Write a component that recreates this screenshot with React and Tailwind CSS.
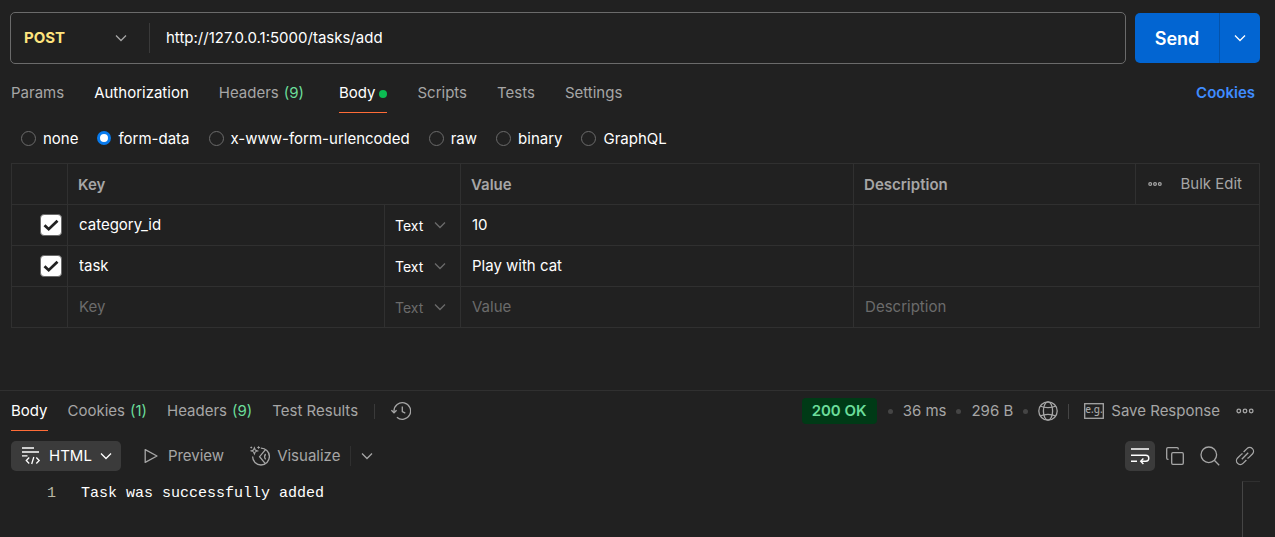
import React from "react";

const UI_FONT = "font-['Inter','Liberation_Sans',sans-serif]";

function Svg({ size = 20, className = "", children }) {
  return (
    <svg
      width={size}
      height={size}
      viewBox={`0 0 ${size} ${size}`}
      fill="none"
      stroke="currentColor"
      strokeWidth="1.3"
      className={`shrink-0 ${className}`}
      aria-hidden="true"
    >
      {children}
    </svg>
  );
}

function Chevron({ className = "" }) {
  return (
    <Svg size={12} className={className}>
      <path d="M1 3.5 6 8.5 11 3.5" />
    </Svg>
  );
}

function Dots() {
  return (
    <Svg size={18}>
      <circle cx="2.8" cy="9" r="1.8" />
      <circle cx="9" cy="9" r="1.8" />
      <circle cx="15.2" cy="9" r="1.8" />
    </Svg>
  );
}

function SmallDots() {
  return (
    <svg width="14" height="6" viewBox="0 0 14 6" fill="none" stroke="currentColor" strokeWidth="1.2" aria-hidden="true">
      <circle cx="2.2" cy="3" r="1.4" />
      <circle cx="7" cy="3" r="1.4" />
      <circle cx="11.8" cy="3" r="1.4" />
    </svg>
  );
}

function HistoryIcon() {
  return (
    <Svg>
      <path d="M3 11.500V10a8.300 8.300 0 1 1 2.900 6.300" />
      <path d="M.4 9.200 3 11.800 5.600 9.200" />
      <path d="M11.300 5.500v5.200l3 1.500" />
    </Svg>
  );
}

function GlobeIcon() {
  return (
    <Svg>
      <circle cx="10" cy="10" r="9.2" />
      <ellipse cx="10" cy="10" rx="4.600" ry="9.200" />
      <path d="M2.200 5c4.300 2.200 11.300 2.200 15.600 0M2.200 15c4.300-2.200 11.300-2.200 15.600 0" />
    </Svg>
  );
}

function ExampleIcon() {
  return (
    <svg width="20" height="16" viewBox="0 0 20 16" fill="none" stroke="currentColor" strokeWidth="1.3" className="shrink-0" aria-hidden="true">
      <rect x=".7" y=".7" width="18.6" height="14.6" />
      <text x="10" y="10" textAnchor="middle" fontFamily="Noto Sans" fontWeight="500" fontSize="10" fill="currentColor" stroke="none">
        e.g.
      </text>
    </svg>
  );
}

function FormatIcon() {
  return (
    <Svg className="text-white">
      <path d="M1 2h12M1 6h17M1 9.800h5.500" />
      <path d="M8.200 11.500 5.300 14.500 8.200 17.500M15.300 11.500 18.200 14.500 15.300 17.500M12.800 11 10.700 18" />
    </Svg>
  );
}

function PlayIcon() {
  return (
    <Svg size={16}>
      <path d="M2.200 1.600v12.800L14 8z" strokeLinejoin="round" />
    </Svg>
  );
}

function VisualizeIcon() {
  return (
    <Svg>
      <path d="M10.800 2.200A8.400 8.400 0 1 1 2.600 10.500" />
      <path d="M15.500 3.600 9.600 10.700 15.300 17.600" />
      <path d="M15.600 8c-1.300 1.700-1.300 3.700 0 5.400" />
      <path d="M4.400 1.700 5.300 4 7.600 4.900 5.300 5.800 4.400 8.100 3.500 5.800 1.200 4.900 3.500 4z" strokeWidth="1.100" />
      <path d="M8.600.2v2.600M7.300 1.500h2.600M1.300 .6v1.800M.4 1.500h1.800" strokeWidth="1" />
    </Svg>
  );
}

function WrapIcon() {
  return (
    <Svg className="text-white">
      <path d="M1 3h18M1 9.200h14.800a2.900 2.900 0 0 1 0 6H11M1 15.200h6" strokeWidth="1.4" />
      <path d="M13.400 12.500 10.700 15.200 13.400 18" strokeWidth="1.400" />
    </Svg>
  );
}

function CopyIcon() {
  return (
    <Svg>
      <rect x="6.700" y="6.700" width="11.600" height="11.600" rx="1.200" />
      <path d="M3.500 13.300H2.900a1.200 1.200 0 0 1-1.200-1.200V2.900a1.200 1.200 0 0 1 1.200-1.200h9.200a1.200 1.200 0 0 1 1.200 1.200v.6" />
    </Svg>
  );
}

function SearchIcon() {
  return (
    <Svg>
      <circle cx="8.800" cy="8.800" r="7.800" />
      <path d="m14.300 14.300 4.900 4.900" />
    </Svg>
  );
}

function LinkIcon() {
  return (
    <Svg>
      <path d="m6.800 13.200 6.400-6.400" />
      <path d="M8.600 6 12 2.600a3.800 3.800 0 0 1 5.400 5.400L14 11.400a3.800 3.800 0 0 1-1.600 1" />
      <path d="M11.400 14 8 17.400A3.800 3.800 0 0 1 2.600 12L6 8.600a3.800 3.800 0 0 1 1.600-1" />
    </Svg>
  );
}

function RequestBar() {
  return (
    <form className="flex items-center gap-[9px] pt-3 pr-[15px] pl-[10px]" onSubmit={(e) => e.preventDefault()}>
      <div className="flex h-[52px] min-w-0 flex-1 items-center rounded-[5px] border border-[#6b6b6b]">
        <div className="relative flex items-center">
          <select aria-label="Method" className="h-8 w-[138px] appearance-none bg-transparent pt-px pl-[13px] text-[15px] font-bold text-[#ffe47e] outline-none">
            <option>POST</option>
          </select>
          <Chevron className="pointer-events-none absolute right-[22px] text-[#a6a6a6]" />
        </div>
        <div className="h-[30px] w-px bg-[#3a3a3a]" />
        <input aria-label="Request URL" defaultValue="http://127.0.0.1:5000/tasks/add" className="h-8 min-w-0 flex-1 bg-transparent px-4 pb-[2px] text-[15px] text-white outline-none" />
      </div>
      <div className="flex h-[50px] overflow-hidden rounded-[5px] bg-[#0265d2] text-white">
        <button type="submit" className="w-[84px] text-[18px] font-semibold">Send</button>
        <button type="button" aria-label="Send options" className="flex w-[41px] items-center justify-center border-l border-[#0453ab]">
          <Chevron />
        </button>
      </div>
    </form>
  );
}

function RequestTabs() {
  const base = "flex h-[40px] items-center border-b pt-[2px]";
  const idle = `${base} border-transparent`;
  return (
    <div className="flex items-center justify-between pt-[9px] pr-5 pl-[11px] text-[15px] text-[#a6a6a6]">
      <nav className="flex gap-[30px]">
        <button className={idle}>Params</button>
        <button className={`${idle} text-white`}>Authorization</button>
        <button className={`${idle} gap-[5px] pr-[5px]`}>
          Headers <span className="text-[#6bdd9a]">(9)</span>
        </button>
        <button className={`${base} gap-1 border-[#ff6c37] text-white`}>
          Body <span className="size-2 rounded-full bg-[#0cbb52]" />
        </button>
        <button className={idle}>Scripts</button>
        <button className={idle}>Tests</button>
        <button className={idle}>Settings</button>
      </nav>
      <a href="#cookies" className="font-semibold text-[#3f8cff]">Cookies</a>
    </div>
  );
}

const bodyTypes = ["none", "form-data", "x-www-form-urlencoded", "raw", "binary", "GraphQL"];

function BodyTypes() {
  return (
    <div role="radiogroup" aria-label="Body type" className="flex h-[50px] items-center gap-[19px] pl-[21px] text-[15px] text-white">
      {bodyTypes.map((t) => (
        <label key={t} className="flex items-center gap-[7px]">
          <input
            type="radio"
            name="body-type"
            defaultChecked={t === "form-data"}
            className="size-[15px] appearance-none rounded-full border border-[#6b6b6b] checked:size-[14px] checked:border-[3px] checked:border-[#097bed] checked:bg-white"
          />
          <span className="pt-[2px]">{t}</span>
        </label>
      ))}
    </div>
  );
}

const rows = [
  { key: "category_id", value: "10" },
  { key: "task", value: "Play with cat" },
  { key: "", value: "" },
];

const cell = "h-[41px] border border-[#303030] p-0";
const head = "h-[41px] border border-[#303030] pt-[2px] pr-0 pb-0 pl-[10px] font-semibold";
const field = "block h-8 w-full bg-transparent px-[11px] pb-[2px] text-[15px] text-white outline-none placeholder:text-[#6b6b6b]";

function ParamTable() {
  return (
    <div className="pr-[15px] pl-[11px]">
      <table className="w-full table-fixed border-collapse text-left text-[15px]">
        <colgroup>
          <col className="w-[56px]" />
          <col className="w-[25.4%]" />
          <col className="w-[76px]" />
          <col className="w-[31.5%]" />
          <col />
          <col className="w-[124px]" />
        </colgroup>
        <thead className="text-[#a6a6a6]">
          <tr>
            <th className={cell} aria-label="Enabled" />
            <th colSpan={2} className={head}>Key</th>
            <th className={head}>Value</th>
            <th className={head}>Description</th>
            <th className={`${cell} font-normal`}>
              <div className="flex items-center justify-between pr-[17px] pl-3">
                <button aria-label="Columns"><SmallDots /></button>
                <button>Bulk Edit</button>
              </div>
            </th>
          </tr>
        </thead>
        <tbody>
          {rows.map((r, i) => (
            <tr key={i}>
              <td className={cell}>
                {r.key && (
                  <label className="relative ml-auto mr-[5px] flex size-[22px] items-center justify-center">
                    <input type="checkbox" defaultChecked aria-label={`Enable ${r.key}`} className="size-[22px] appearance-none rounded-[4px] border border-[#6b6b6b] bg-white" />
                    <svg width="16" height="14" viewBox="0 0 16 14" fill="none" stroke="#212121" strokeWidth="2.800" className="pointer-events-none absolute" aria-hidden="true">
                      <path d="M1.500 7.300 5.700 11.200 14.500 2.800" />
                    </svg>
                  </label>
                )}
              </td>
              <td className={cell}>
                <input aria-label={`Key ${i + 1}`} placeholder="Key" defaultValue={r.key} className={field} />
              </td>
              <td className={cell}>
                <div className="relative flex items-center">
                  <select aria-label={`Type ${i + 1}`} className={`h-8 w-full appearance-none bg-transparent pl-[10px] text-[14px] outline-none ${r.key ? "text-white" : "text-[#6b6b6b]"}`}>
                    <option>Text</option>
                  </select>
                  <Chevron className="pointer-events-none absolute right-[14px] text-[#6b6b6b]" />
                </div>
              </td>
              <td className={cell}>
                <input aria-label={`Value ${i + 1}`} placeholder="Value" defaultValue={r.value} className={field} />
              </td>
              <td className={cell} colSpan={2}>
                <input aria-label={`Description ${i + 1}`} placeholder={r.key ? "" : "Description"} className={field} />
              </td>
            </tr>
          ))}
        </tbody>
      </table>
    </div>
  );
}

function Dot() {
  return <span className="size-[5px] rounded-full bg-[#454545]" />;
}

function ResponseTabs() {
  const base = "flex h-[40px] items-center gap-[5px] border-b pt-[2px]";
  const idle = `${base} border-transparent`;
  return (
    <div className="flex items-center justify-between border-t border-[#303030] pr-[21px] pl-[11px] text-[15px] text-[#a6a6a6]">
      <nav className="flex items-center gap-5">
        <button className={`${base} border-[#ff6c37] text-white`}>Body</button>
        <button className={idle}>Cookies <span className="text-[#6bdd9a]">(1)</span></button>
        <button className={idle}>Headers <span className="text-[#6bdd9a]">(9)</span></button>
        <button className={idle}>Test Results</button>
        <div className="-mx-1 h-[15px] w-px bg-[#3a3a3a]" />
        <button aria-label="History"><HistoryIcon /></button>
      </nav>
      <div className="flex items-center gap-[10px]">
        <div className="flex items-center gap-[10px]">
          <span className="mr-px flex h-[26px] items-center rounded-[4px] bg-[#003a16] px-[10px] font-semibold text-[#6bdd9a]">200 OK</span>
          <Dot />
          <span>36 ms</span>
          <Dot />
          <span>296 B</span>
          <Dot />
          <button aria-label="Network"><GlobeIcon /></button>
        </div>
        <div className="h-[15px] w-px bg-[#454545]" />
        <button className="ml-[5px] flex items-center gap-[7px]"><ExampleIcon />Save Response</button>
        <button aria-label="More" className="ml-[6px]"><Dots /></button>
      </div>
    </div>
  );
}

function ResponseToolbar() {
  const icon = "flex size-[30px] items-center justify-center rounded-[5px]";
  return (
    <div className="flex items-center justify-between pt-[10px] pr-[15px] pl-[11px] text-[15px] text-[#a6a6a6]">
      <div className="flex items-center">
        <button className="flex h-[30px] items-center gap-2 rounded-[5px] bg-[#3b3b3b] pr-[9px] pl-[10px] text-white">
          <FormatIcon />HTML<Chevron />
        </button>
        <button className="ml-[22px] flex items-center gap-[9px]"><PlayIcon />Preview</button>
        <button className="ml-[26px] flex items-center gap-[7px]"><VisualizeIcon />Visualize</button>
        <div className="mx-[10px] h-[20px] w-px bg-[#303030]" />
        <button aria-label="Visualize options"><Chevron /></button>
      </div>
      <div className="flex gap-[5px]">
        <button aria-label="Wrap lines" className={`${icon} bg-[#3b3b3b]`}><WrapIcon /></button>
        <button aria-label="Copy" className={icon}><CopyIcon /></button>
        <button aria-label="Search" className={icon}><SearchIcon /></button>
        <button aria-label="Copy link" className={icon}><LinkIcon /></button>
      </div>
    </div>
  );
}

export default function App() {
  return (
    <main className={`flex min-h-screen flex-col bg-[#212121] ${UI_FONT}`}>
      <RequestBar />
      <RequestTabs />
      <BodyTypes />
      <ParamTable />
      <section className="mt-[62px] flex flex-1 flex-col">
        <ResponseTabs />
        <ResponseToolbar />
        <div className="flex flex-1 pt-[10px] pr-[15px] font-['Liberation_Mono',monospace] text-[15px] leading-[26px]">
          <div className="w-[56px] text-right text-[#b9b7a5]">1</div>
          <pre className="flex-1 pl-[25px] font-['Liberation_Mono',monospace] text-white">Task was successfully added</pre>
          <div className="w-[18px] border-t border-l border-t-[#303030] border-l-[#454545]" />
        </div>
      </section>
    </main>
  );
}
